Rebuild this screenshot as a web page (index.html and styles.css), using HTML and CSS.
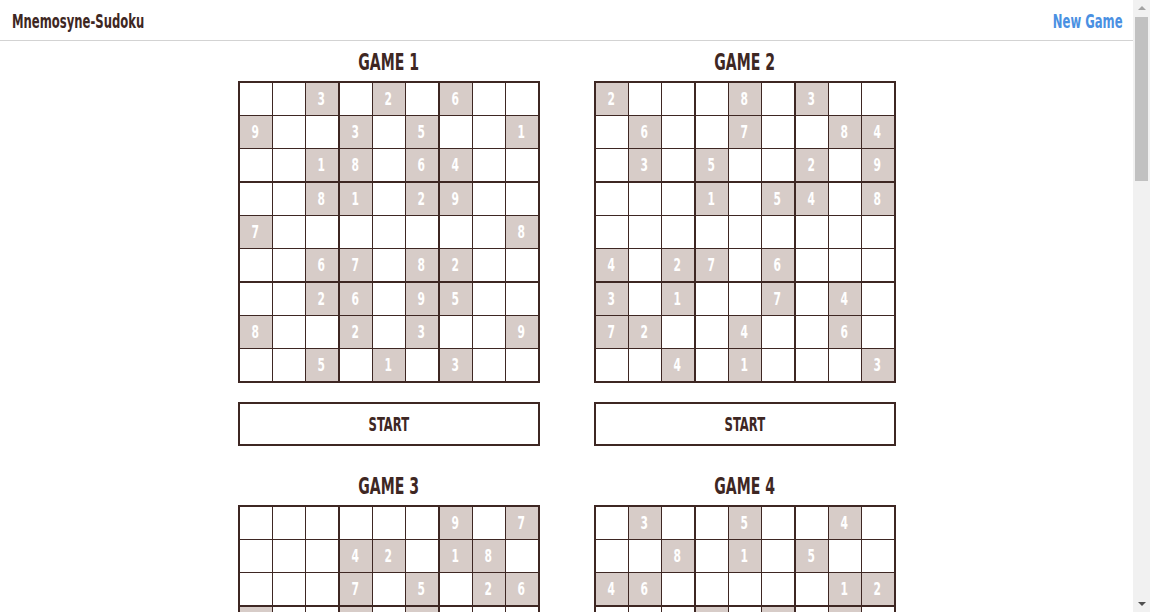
FILE: index.html
```html
<!DOCTYPE html>
<html>
<head>
<meta charset="utf-8">
<title>Mnemosyne-Sudoku</title>
<link rel="stylesheet" href="styles.css">
</head>
<body>
<div class="page">
<header class="topbar">
  <div class="brand"><span class="squeeze squeeze-left">Mnemosyne-Sudoku</span></div>
  <a class="new-game" href="#"><span class="squeeze squeeze-right">New Game</span></a>
</header>
<main class="games">
  <section class="game">
    <h2 class="game-title"><span class="squeeze">GAME 1</span></h2>
    <div class="board">
      <div class="row"><span class="cell"></span><span class="cell"></span><span class="cell given"><b>3</b></span><span class="cell"></span><span class="cell given"><b>2</b></span><span class="cell"></span><span class="cell given"><b>6</b></span><span class="cell"></span><span class="cell"></span></div>
      <div class="row"><span class="cell given"><b>9</b></span><span class="cell"></span><span class="cell"></span><span class="cell given"><b>3</b></span><span class="cell"></span><span class="cell given"><b>5</b></span><span class="cell"></span><span class="cell"></span><span class="cell given"><b>1</b></span></div>
      <div class="row"><span class="cell"></span><span class="cell"></span><span class="cell given"><b>1</b></span><span class="cell given"><b>8</b></span><span class="cell"></span><span class="cell given"><b>6</b></span><span class="cell given"><b>4</b></span><span class="cell"></span><span class="cell"></span></div>
      <div class="row"><span class="cell"></span><span class="cell"></span><span class="cell given"><b>8</b></span><span class="cell given"><b>1</b></span><span class="cell"></span><span class="cell given"><b>2</b></span><span class="cell given"><b>9</b></span><span class="cell"></span><span class="cell"></span></div>
      <div class="row"><span class="cell given"><b>7</b></span><span class="cell"></span><span class="cell"></span><span class="cell"></span><span class="cell"></span><span class="cell"></span><span class="cell"></span><span class="cell"></span><span class="cell given"><b>8</b></span></div>
      <div class="row"><span class="cell"></span><span class="cell"></span><span class="cell given"><b>6</b></span><span class="cell given"><b>7</b></span><span class="cell"></span><span class="cell given"><b>8</b></span><span class="cell given"><b>2</b></span><span class="cell"></span><span class="cell"></span></div>
      <div class="row"><span class="cell"></span><span class="cell"></span><span class="cell given"><b>2</b></span><span class="cell given"><b>6</b></span><span class="cell"></span><span class="cell given"><b>9</b></span><span class="cell given"><b>5</b></span><span class="cell"></span><span class="cell"></span></div>
      <div class="row"><span class="cell given"><b>8</b></span><span class="cell"></span><span class="cell"></span><span class="cell given"><b>2</b></span><span class="cell"></span><span class="cell given"><b>3</b></span><span class="cell"></span><span class="cell"></span><span class="cell given"><b>9</b></span></div>
      <div class="row"><span class="cell"></span><span class="cell"></span><span class="cell given"><b>5</b></span><span class="cell"></span><span class="cell given"><b>1</b></span><span class="cell"></span><span class="cell given"><b>3</b></span><span class="cell"></span><span class="cell"></span></div>
    </div>
    <button class="start"><span class="squeeze">START</span></button>
  </section>
  <section class="game">
    <h2 class="game-title"><span class="squeeze">GAME 2</span></h2>
    <div class="board">
      <div class="row"><span class="cell given"><b>2</b></span><span class="cell"></span><span class="cell"></span><span class="cell"></span><span class="cell given"><b>8</b></span><span class="cell"></span><span class="cell given"><b>3</b></span><span class="cell"></span><span class="cell"></span></div>
      <div class="row"><span class="cell"></span><span class="cell given"><b>6</b></span><span class="cell"></span><span class="cell"></span><span class="cell given"><b>7</b></span><span class="cell"></span><span class="cell"></span><span class="cell given"><b>8</b></span><span class="cell given"><b>4</b></span></div>
      <div class="row"><span class="cell"></span><span class="cell given"><b>3</b></span><span class="cell"></span><span class="cell given"><b>5</b></span><span class="cell"></span><span class="cell"></span><span class="cell given"><b>2</b></span><span class="cell"></span><span class="cell given"><b>9</b></span></div>
      <div class="row"><span class="cell"></span><span class="cell"></span><span class="cell"></span><span class="cell given"><b>1</b></span><span class="cell"></span><span class="cell given"><b>5</b></span><span class="cell given"><b>4</b></span><span class="cell"></span><span class="cell given"><b>8</b></span></div>
      <div class="row"><span class="cell"></span><span class="cell"></span><span class="cell"></span><span class="cell"></span><span class="cell"></span><span class="cell"></span><span class="cell"></span><span class="cell"></span><span class="cell"></span></div>
      <div class="row"><span class="cell given"><b>4</b></span><span class="cell"></span><span class="cell given"><b>2</b></span><span class="cell given"><b>7</b></span><span class="cell"></span><span class="cell given"><b>6</b></span><span class="cell"></span><span class="cell"></span><span class="cell"></span></div>
      <div class="row"><span class="cell given"><b>3</b></span><span class="cell"></span><span class="cell given"><b>1</b></span><span class="cell"></span><span class="cell"></span><span class="cell given"><b>7</b></span><span class="cell"></span><span class="cell given"><b>4</b></span><span class="cell"></span></div>
      <div class="row"><span class="cell given"><b>7</b></span><span class="cell given"><b>2</b></span><span class="cell"></span><span class="cell"></span><span class="cell given"><b>4</b></span><span class="cell"></span><span class="cell"></span><span class="cell given"><b>6</b></span><span class="cell"></span></div>
      <div class="row"><span class="cell"></span><span class="cell"></span><span class="cell given"><b>4</b></span><span class="cell"></span><span class="cell given"><b>1</b></span><span class="cell"></span><span class="cell"></span><span class="cell"></span><span class="cell given"><b>3</b></span></div>
    </div>
    <button class="start"><span class="squeeze">START</span></button>
  </section>
  <section class="game">
    <h2 class="game-title"><span class="squeeze">GAME 3</span></h2>
    <div class="board">
      <div class="row"><span class="cell"></span><span class="cell"></span><span class="cell"></span><span class="cell"></span><span class="cell"></span><span class="cell"></span><span class="cell given"><b>9</b></span><span class="cell"></span><span class="cell given"><b>7</b></span></div>
      <div class="row"><span class="cell"></span><span class="cell"></span><span class="cell"></span><span class="cell given"><b>4</b></span><span class="cell given"><b>2</b></span><span class="cell"></span><span class="cell given"><b>1</b></span><span class="cell given"><b>8</b></span><span class="cell"></span></div>
      <div class="row"><span class="cell"></span><span class="cell"></span><span class="cell"></span><span class="cell given"><b>7</b></span><span class="cell"></span><span class="cell given"><b>5</b></span><span class="cell"></span><span class="cell given"><b>2</b></span><span class="cell given"><b>6</b></span></div>
      <div class="row"><span class="cell given"><b>5</b></span><span class="cell"></span><span class="cell"></span><span class="cell given"><b>9</b></span><span class="cell"></span><span class="cell given"><b>4</b></span><span class="cell"></span><span class="cell"></span><span class="cell"></span></div>
      <div class="row"><span class="cell"></span><span class="cell given"><b>7</b></span><span class="cell"></span><span class="cell"></span><span class="cell given"><b>8</b></span><span class="cell"></span><span class="cell"></span><span class="cell given"><b>3</b></span><span class="cell"></span></div>
      <div class="row"><span class="cell"></span><span class="cell"></span><span class="cell"></span><span class="cell given"><b>6</b></span><span class="cell"></span><span class="cell given"><b>1</b></span><span class="cell"></span><span class="cell"></span><span class="cell given"><b>5</b></span></div>
      <div class="row"><span class="cell given"><b>6</b></span><span class="cell given"><b>4</b></span><span class="cell"></span><span class="cell given"><b>2</b></span><span class="cell"></span><span class="cell given"><b>3</b></span><span class="cell"></span><span class="cell"></span><span class="cell"></span></div>
      <div class="row"><span class="cell"></span><span class="cell given"><b>5</b></span><span class="cell given"><b>8</b></span><span class="cell"></span><span class="cell given"><b>9</b></span><span class="cell given"><b>7</b></span><span class="cell"></span><span class="cell"></span><span class="cell"></span></div>
      <div class="row"><span class="cell given"><b>3</b></span><span class="cell"></span><span class="cell given"><b>1</b></span><span class="cell"></span><span class="cell"></span><span class="cell"></span><span class="cell"></span><span class="cell"></span><span class="cell"></span></div>
    </div>
    <button class="start"><span class="squeeze">START</span></button>
  </section>
  <section class="game">
    <h2 class="game-title"><span class="squeeze">GAME 4</span></h2>
    <div class="board">
      <div class="row"><span class="cell"></span><span class="cell given"><b>3</b></span><span class="cell"></span><span class="cell"></span><span class="cell given"><b>5</b></span><span class="cell"></span><span class="cell"></span><span class="cell given"><b>4</b></span><span class="cell"></span></div>
      <div class="row"><span class="cell"></span><span class="cell"></span><span class="cell given"><b>8</b></span><span class="cell"></span><span class="cell given"><b>1</b></span><span class="cell"></span><span class="cell given"><b>5</b></span><span class="cell"></span><span class="cell"></span></div>
      <div class="row"><span class="cell given"><b>4</b></span><span class="cell given"><b>6</b></span><span class="cell"></span><span class="cell"></span><span class="cell"></span><span class="cell"></span><span class="cell"></span><span class="cell given"><b>1</b></span><span class="cell given"><b>2</b></span></div>
      <div class="row"><span class="cell"></span><span class="cell"></span><span class="cell"></span><span class="cell given"><b>7</b></span><span class="cell"></span><span class="cell given"><b>2</b></span><span class="cell"></span><span class="cell given"><b>9</b></span><span class="cell"></span></div>
      <div class="row"><span class="cell given"><b>9</b></span><span class="cell"></span><span class="cell"></span><span class="cell"></span><span class="cell given"><b>6</b></span><span class="cell"></span><span class="cell"></span><span class="cell"></span><span class="cell given"><b>8</b></span></div>
      <div class="row"><span class="cell"></span><span class="cell given"><b>2</b></span><span class="cell"></span><span class="cell given"><b>3</b></span><span class="cell"></span><span class="cell"></span><span class="cell"></span><span class="cell"></span><span class="cell"></span></div>
      <div class="row"><span class="cell given"><b>1</b></span><span class="cell given"><b>7</b></span><span class="cell"></span><span class="cell"></span><span class="cell"></span><span class="cell"></span><span class="cell"></span><span class="cell given"><b>6</b></span><span class="cell given"><b>5</b></span></div>
      <div class="row"><span class="cell"></span><span class="cell"></span><span class="cell given"><b>9</b></span><span class="cell"></span><span class="cell given"><b>4</b></span><span class="cell"></span><span class="cell given"><b>3</b></span><span class="cell"></span><span class="cell"></span></div>
      <div class="row"><span class="cell"></span><span class="cell given"><b>8</b></span><span class="cell"></span><span class="cell"></span><span class="cell given"><b>2</b></span><span class="cell"></span><span class="cell"></span><span class="cell given"><b>7</b></span><span class="cell"></span></div>
    </div>
    <button class="start"><span class="squeeze">START</span></button>
  </section>
</main>
</div>
<div class="scrollbar" aria-hidden="true">
  <div class="scroll-up"></div>
  <div class="scroll-thumb"></div>
  <div class="scroll-down"></div>
</div>
</body>
</html>
```

FILE: styles.css
```css
html, body {
  margin: 0;
  padding: 0;
  background: #ffffff;
}

body {
  font-family: "DejaVu Sans Condensed", "DejaVu Sans", sans-serif;
  color: #3e2723;
}

.page {
  padding-right: 17px;
}

.squeeze {
  display: inline-block;
  transform: scaleX(0.68);
  transform-origin: center;
  white-space: nowrap;
}

.squeeze-left {
  transform-origin: left center;
}

.squeeze-right {
  transform-origin: right center;
}

.topbar {
  height: 40px;
  border-bottom: 1px solid #d3d3d3;
  display: flex;
  align-items: center;
  justify-content: space-between;
  padding: 0 10px 0 12px;
}

.brand {
  font-size: 19px;
  font-weight: bold;
  color: #3e2723;
  padding-top: 1px;
}

.new-game {
  font-size: 19px;
  font-weight: bold;
  color: #4a90e2;
  text-decoration: none;
  padding-top: 1px;
}

.games {
  display: grid;
  grid-template-columns: 302px 302px;
  column-gap: 54px;
  justify-content: center;
  padding-top: 9px;
}

.game {
  display: flex;
  flex-direction: column;
  align-items: stretch;
  padding-bottom: 28px;
}

.game-title {
  margin: 0 0 7px 0;
  height: 24px;
  line-height: 24px;
  font-size: 23px;
  font-weight: bold;
  text-align: center;
  color: #3e2723;
}

.board {
  display: flex;
  flex-direction: column;
  gap: 1px;
  border: 2px solid #3e2723;
  background: #3e2723;
}

.row {
  display: flex;
  gap: 1px;
}

.row:nth-child(3),
.row:nth-child(6) {
  margin-bottom: 1px;
}

.cell {
  width: 32px;
  height: 32px;
  background: #ffffff;
  display: flex;
  align-items: center;
  justify-content: center;
  font-size: 17px;
  color: #ffffff;
}

.cell b {
  display: inline-block;
  font-weight: bold;
  transform: scaleX(0.7);
}

.cell:nth-child(3),
.cell:nth-child(6) {
  margin-right: 1px;
}

.cell.given {
  background: #d7ccc8;
}

.start {
  margin-top: 19px;
  height: 44px;
  border: 2px solid #3e2723;
  background: #ffffff;
  font-family: inherit;
  font-size: 19px;
  font-weight: bold;
  color: #3e2723;
  padding: 0;
}

.scrollbar {
  position: fixed;
  top: 0;
  right: 0;
  bottom: 0;
  width: 17px;
  background: #f1f1f1;
  display: flex;
  flex-direction: column;
  align-items: center;
}

.scroll-up {
  width: 0;
  height: 0;
  margin-top: 6px;
  border-left: 4px solid transparent;
  border-right: 4px solid transparent;
  border-bottom: 4px solid #a3a3a3;
}

.scroll-thumb {
  margin-top: 7px;
  width: 13px;
  height: 164px;
  background: #c1c1c1;
}

.scroll-down {
  width: 0;
  height: 0;
  margin-top: auto;
  margin-bottom: 6px;
  border-left: 4px solid transparent;
  border-right: 4px solid transparent;
  border-top: 4px solid #505050;
}
```
